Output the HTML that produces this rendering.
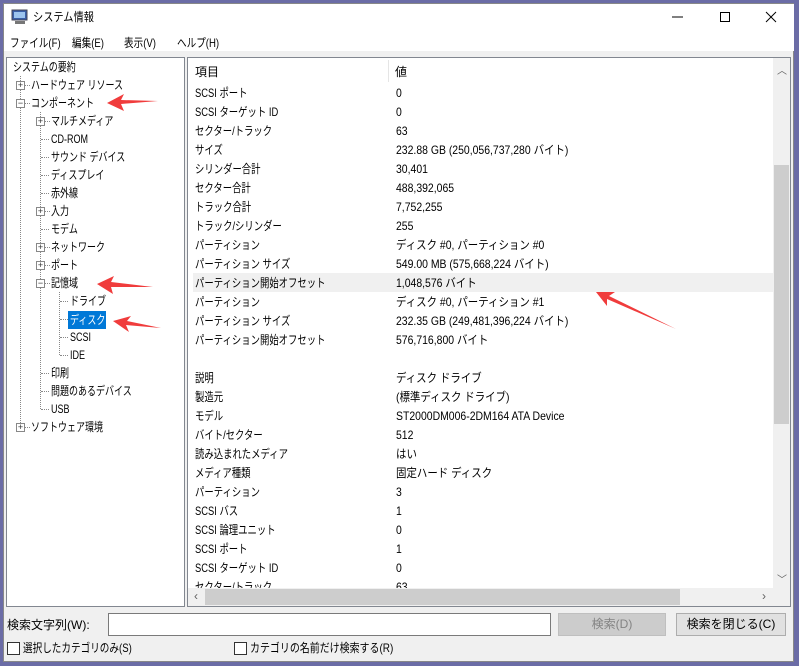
<!DOCTYPE html>
<html><head><meta charset="utf-8"><style>
*{margin:0;padding:0;box-sizing:border-box}
body{width:799px;height:666px;overflow:hidden;background:#6b6ca6;font-family:"Liberation Sans","Noto Sans CJK JP",sans-serif;font-size:12px;color:#000;position:relative}
.a{position:absolute;white-space:nowrap}
#win{position:absolute;left:3px;top:3px;width:791px;height:659px;background:#f0f0f0;border:1px solid #888}
.t{line-height:16px}
.dl{position:absolute;border-left:1px dotted #888}
.dh{position:absolute;border-top:1px dotted #888;width:8px}
.bx{position:absolute;width:9px;height:9px;border:1px solid #888;background:#fff;font-size:9px;line-height:7px;text-align:center;color:#333}
.tr{transform:scaleX(0.75);transform-origin:0 0}
.s8{transform:scaleX(0.8);transform-origin:0 0}
</style></head><body>
<div id="win"></div>
<div class="a" style="left:4px;top:4px;width:790px;height:47px;background:#fff"></div>
<svg class="a" style="left:11px;top:9px" width="18" height="16"><rect x="1" y="1" width="15" height="10" fill="#3a5fa8" stroke="#445" /><rect x="3" y="3" width="11" height="6" fill="#9cc4ee"/><rect x="4" y="12" width="10" height="3" fill="#777"/></svg>
<div class="a t" style="left:33px;top:9px;transform:scaleX(0.85);transform-origin:0 0">システム情報</div>
<svg class="a" style="left:670px;top:10px" width="110" height="14"><line x1="2" y1="7" x2="13" y2="7" stroke="#000"/><rect x="50.5" y="2.5" width="9" height="9" fill="none" stroke="#000"/><line x1="96" y1="2" x2="106" y2="12" stroke="#000"/><line x1="106" y1="2" x2="96" y2="12" stroke="#000"/></svg>
<div class="a t s8" style="left:10px;top:35px">ファイル(F)</div>
<div class="a t s8" style="left:72px;top:35px">編集(E)</div>
<div class="a t s8" style="left:124px;top:35px">表示(V)</div>
<div class="a t s8" style="left:177px;top:35px">ヘルプ(H)</div>

<!-- left tree -->
<div class="a" style="left:6px;top:57px;width:179px;height:550px;background:#fff;border:1px solid #828790"></div>
<div class="dl" style="left:20px;top:76px;height:351px"></div>
<div class="dl" style="left:40px;top:112px;height:297px"></div>
<div class="dl" style="left:59px;top:292px;height:63px"></div>
<div class="a t tr" style="left:13px;top:59px">システムの要約</div>
<div class="bx" style="left:16px;top:81px">+</div><div class="dh" style="left:25px;top:85px;width:5px"></div><div class="a t tr" style="left:31px;top:77px">ハードウェア リソース</div>
<div class="bx" style="left:16px;top:99px">−</div><div class="dh" style="left:25px;top:103px;width:5px"></div><div class="a t tr" style="left:31px;top:95px">コンポーネント</div>
<div class="bx" style="left:36px;top:117px">+</div><div class="dh" style="left:45px;top:121px;width:5px"></div><div class="a t tr" style="left:51px;top:113px">マルチメディア</div>
<div class="dh" style="left:41px;top:139px"></div><div class="a t tr" style="left:51px;top:131px">CD-ROM</div>
<div class="dh" style="left:41px;top:157px"></div><div class="a t tr" style="left:51px;top:149px">サウンド デバイス</div>
<div class="dh" style="left:41px;top:175px"></div><div class="a t tr" style="left:51px;top:167px">ディスプレイ</div>
<div class="dh" style="left:41px;top:193px"></div><div class="a t tr" style="left:51px;top:185px">赤外線</div>
<div class="bx" style="left:36px;top:207px">+</div><div class="dh" style="left:45px;top:211px;width:5px"></div><div class="a t tr" style="left:51px;top:203px">入力</div>
<div class="dh" style="left:41px;top:229px"></div><div class="a t tr" style="left:51px;top:221px">モデム</div>
<div class="bx" style="left:36px;top:243px">+</div><div class="dh" style="left:45px;top:247px;width:5px"></div><div class="a t tr" style="left:51px;top:239px">ネットワーク</div>
<div class="bx" style="left:36px;top:261px">+</div><div class="dh" style="left:45px;top:265px;width:5px"></div><div class="a t tr" style="left:51px;top:257px">ポート</div>
<div class="bx" style="left:36px;top:279px">−</div><div class="dh" style="left:45px;top:283px;width:5px"></div><div class="a t tr" style="left:51px;top:275px">記憶域</div>
<div class="dh" style="left:60px;top:301px"></div><div class="a t tr" style="left:70px;top:293px">ドライブ</div>
<div class="dh" style="left:60px;top:319px"></div><div class="a" style="left:68px;top:311px;background:#0078d7;width:38px;height:18px"></div><div class="a t tr" style="left:70px;top:312px;color:#fff">ディスク</div>
<div class="dh" style="left:60px;top:337px"></div><div class="a t tr" style="left:70px;top:329px">SCSI</div>
<div class="dh" style="left:60px;top:355px"></div><div class="a t tr" style="left:70px;top:347px">IDE</div>
<div class="dh" style="left:41px;top:373px"></div><div class="a t tr" style="left:51px;top:365px">印刷</div>
<div class="dh" style="left:41px;top:391px"></div><div class="a t tr" style="left:51px;top:383px">問題のあるデバイス</div>
<div class="dh" style="left:41px;top:409px"></div><div class="a t tr" style="left:51px;top:401px">USB</div>
<div class="bx" style="left:16px;top:423px">+</div><div class="dh" style="left:25px;top:427px;width:5px"></div><div class="a t tr" style="left:31px;top:419px">ソフトウェア環境</div>

<!-- right list -->
<div class="a" style="left:187px;top:57px;width:604px;height:550px;background:#fff;border:1px solid #828790;overflow:hidden">
<div class="a" style="left:5px;top:215px;width:580px;height:19px;background:#f0f0f0"></div>
<div class="a" style="left:200px;top:2px;height:22px;border-left:1px solid #e5e5e5"></div>
<div class="a t" style="left:7px;top:6px">項目</div><div class="a t" style="left:207px;top:6px">値</div>
<div class="a" style="left:7px;top:26px;line-height:19px;transform:scaleX(0.78);transform-origin:0 0">SCSI ポート<br>SCSI ターゲット ID<br>セクター/トラック<br>サイズ<br>シリンダー合計<br>セクター合計<br>トラック合計<br>トラック/シリンダー<br>パーティション<br>パーティション サイズ<br>パーティション開始オフセット<br>パーティション<br>パーティション サイズ<br>パーティション開始オフセット<br>&nbsp;<br>説明<br>製造元<br>モデル<br>バイト/セクター<br>読み込まれたメディア<br>メディア種類<br>パーティション<br>SCSI バス<br>SCSI 論理ユニット<br>SCSI ポート<br>SCSI ターゲット ID<br>セクター/トラック</div>
<div class="a" style="left:208px;top:26px;line-height:19px;transform:scaleX(0.87);transform-origin:0 0">0<br>0<br>63<br>232.88 GB (250,056,737,280 バイト)<br>30,401<br>488,392,065<br>7,752,255<br>255<br>ディスク #0, パーティション #0<br>549.00 MB (575,668,224 バイト)<br>1,048,576 バイト<br>ディスク #0, パーティション #1<br>232.35 GB (249,481,396,224 バイト)<br>576,716,800 バイト<br>&nbsp;<br>ディスク ドライブ<br>(標準ディスク ドライブ)<br>ST2000DM006-2DM164 ATA Device<br>512<br>はい<br>固定ハード ディスク<br>3<br>1<br>0<br>1<br>0<br>63</div>
<div class="a" style="left:585px;top:0;width:17px;height:530px;background:#f0f0f0"></div>
<div class="a" style="left:586px;top:107px;width:15px;height:259px;background:#cdcdcd"></div>
<div class="a" style="left:589px;top:4px;color:#606060;font-size:10px">︿</div>
<div class="a" style="left:589px;top:513px;color:#606060;font-size:10px">﹀</div>
<div class="a" style="left:0;top:530px;width:602px;height:18px;background:#f0f0f0"></div>
<div class="a" style="left:17px;top:531px;width:475px;height:16px;background:#cdcdcd"></div>
<div class="a" style="left:6px;top:531px;color:#606060;font-size:12px">‹</div>
<div class="a" style="left:574px;top:531px;color:#606060;font-size:12px">›</div>
<div class="a" style="left:585px;top:530px;width:17px;height:18px;background:#f0f0f0"></div>
</div>

<!-- arrows -->
<svg class="a" style="left:0;top:0" width="799" height="666">
<g fill="#f03c3c">
<polygon points="107,103 124,94 121,100 158,101 121,104 124,111"/>
<polygon points="97,284 114,276 111,282 153,287 111,287 113,294"/>
<polygon points="113,321 131,316 127,321 161,328 126,325 129,332"/>
<polygon points="596,292 615,292 609,296 676,329 607,299 607,306"/>
</g></svg>

<!-- bottom -->
<div class="a t" style="left:7px;top:617px">検索文字列(W):</div>
<div class="a" style="left:108px;top:613px;width:443px;height:23px;background:#fff;border:1px solid #7a7a7a"></div>
<div class="a" style="left:558px;top:613px;width:108px;height:23px;background:#ccc;border:1px solid #bfbfbf;color:#838383;text-align:center;line-height:21px">検索(D)</div>
<div class="a" style="left:676px;top:613px;width:110px;height:23px;background:#e1e1e1;border:1px solid #adadad;text-align:center;line-height:21px">検索を閉じる(C)</div>
<div class="a" style="left:7px;top:642px;width:13px;height:13px;border:1px solid #333;background:#fff"></div>
<div class="a t s8" style="left:23px;top:640px">選択したカテゴリのみ(S)</div>
<div class="a" style="left:234px;top:642px;width:13px;height:13px;border:1px solid #333;background:#fff"></div>
<div class="a t" style="left:250px;top:640px;transform:scaleX(0.83);transform-origin:0 0">カテゴリの名前だけ検索する(R)</div>
</body></html>
